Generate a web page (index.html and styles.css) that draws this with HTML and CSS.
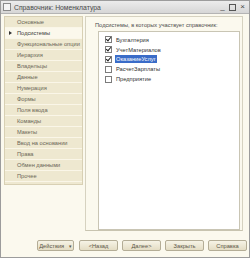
FILE: index.html
```html
<!DOCTYPE html>
<html>
<head>
    <link rel="stylesheet" href="styles.css">
</head>
<body>
<div class="window">
    <div class="titlebar">
        <span class="app-icon"></span>
        <span class="title">Справочник: Номенклатура</span>
        <span class="controls">
            <span class="ctl">_</span>
            <span class="ctl box"></span>
            <span class="ctl">×</span>
        </span>
    </div>

    <div class="main">
        <ul class="nav">
            <li>Основные</li>
            <li class="active">Подсистемы</li>
            <li>Функциональные опции</li>
            <li>Иерархия</li>
            <li>Владельцы</li>
            <li>Данные</li>
            <li>Нумерация</li>
            <li>Формы</li>
            <li>Поля ввода</li>
            <li>Команды</li>
            <li>Макеты</li>
            <li>Ввод на основании</li>
            <li>Права</li>
            <li>Обмен данными</li>
            <li>Прочее</li>
        </ul>

        <div class="pane">
            <div class="caption">Подсистемы, в которых участвует справочник:</div>
            <div class="listbox">
                <div class="row"><span class="check on"></span><span class="name">Бухгалтерия</span></div>
                <div class="row"><span class="check on"></span><span class="name">УчетМатериалов</span></div>
                <div class="row"><span class="check on"></span><span class="name selected">ОказаниеУслуг</span></div>
                <div class="row"><span class="check"></span><span class="name">РасчетЗарплаты</span></div>
                <div class="row"><span class="check"></span><span class="name">Предприятие</span></div>
            </div>
        </div>
    </div>

    <div class="footer">
        <button class="btn actions">Действия <span class="arrow">▾</span></button>
        <button class="btn">&lt;Назад</button>
        <button class="btn">Далее&gt;</button>
        <button class="btn">Закрыть</button>
        <button class="btn">Справка</button>
    </div>
</div>
</body>
</html>
```

FILE: styles.css
```css
body {
    margin: 0;
    background-color: #ffffff;
    font-family: "Liberation Sans", Arial, sans-serif;
}

.window {
    width: 250px;
    height: 258px;
    box-sizing: border-box;
    border: 1px solid #9c9c9c;
    background-color: #fbf9ee;
    display: flex;
    flex-direction: column;
}

.titlebar {
    height: 12px;
    display: flex;
    align-items: center;
    background: linear-gradient(#ececec, #d6d6d6);
    border-bottom: 1px solid #b4b4b4;
    padding: 0 2px;
}

.app-icon {
    width: 6px;
    height: 6px;
    border: 1px solid #8a8a8a;
    background: #f4f4f4;
    margin-right: 3px;
}

.title {
    font-size: 6.8px;
    color: #4a4a4a;
    flex: 1;
    white-space: nowrap;
}

.controls {
    display: flex;
    gap: 3px;
    align-items: center;
    margin-right: 1px;
}

.ctl {
    font-size: 8px;
    line-height: 8px;
    color: #444;
    width: 7px;
    text-align: center;
}

.ctl.box {
    width: 5px;
    height: 5px;
    border: 1px solid #555;
}

.main {
    flex: 1;
    display: flex;
    padding: 2px 6px 0 3px;
    gap: 2px;
}

.nav {
    list-style: none;
    margin: 0;
    padding: 0;
    width: 79px;
    height: 169px;
    background-color: #eee8d0;
    border: 1px solid #d8d0b4;
    box-sizing: border-box;
}

.nav li {
    height: 11px;
    line-height: 11px;
    font-size: 5.7px;
    color: #6a6656;
    padding-left: 12px;
    border-bottom: 1px solid #faf6e8;
    box-sizing: border-box;
    position: relative;
    white-space: nowrap;
}

.nav li.active {
    background-color: #fbf8ec;
    color: #3a3a3a;
}

.nav li.active::before {
    content: "";
    position: absolute;
    left: 4px;
    top: 3px;
    border-left: 3px solid #333;
    border-top: 2.5px solid transparent;
    border-bottom: 2.5px solid transparent;
}

.pane {
    flex: 1;
    border: 1px solid #d6d2c0;
    border-bottom-color: #c8c4b0;
    margin-bottom: 4px;
    padding: 4px 2px 0 9px;
    display: flex;
    flex-direction: column;
}

.caption {
    font-size: 5.7px;
    color: #4a4a4a;
    height: 10px;
    line-height: 8px;
    white-space: nowrap;
}

.listbox {
    flex: 1;
    background-color: #ffffff;
    border: 1px solid #c9c5b4;
    margin-left: 3px;
    padding-top: 3px;
    padding-left: 6px;
}

.row {
    height: 9.8px;
    display: flex;
    align-items: center;
    gap: 3px;
    font-size: 5.7px;
    color: #303030;
    white-space: nowrap;
}

.check {
    width: 5px;
    height: 5px;
    border: 1px solid #7c7c7c;
    background: #fff;
    position: relative;
}

.check.on::after {
    content: "";
    position: absolute;
    left: 1px;
    top: -1px;
    width: 2px;
    height: 4px;
    border-right: 1px solid #222;
    border-bottom: 1px solid #222;
    transform: rotate(40deg);
}

.name {
    padding: 1px 1px;
}

.name.selected {
    background-color: #3a6cc8;
    color: #ffffff;
}

.footer {
    height: 22px;
    display: flex;
    justify-content: flex-end;
    align-items: flex-start;
    gap: 4px;
    padding: 5px 2px 0 0;
    box-sizing: border-box;
}

.btn {
    flex: 0 0 39px;
    width: 39px;
    height: 11px;
    padding: 0;
    font-family: "Liberation Sans", Arial, sans-serif;
    font-size: 5.7px;
    color: #5a5646;
    background: linear-gradient(#f6f3e6, #e4ddc4);
    border: 1px solid #b4ad96;
    border-radius: 2px;
    white-space: nowrap;
}

.btn.actions {
    flex-basis: 37px;
    width: 37px;
    margin-right: 1px;
}

.arrow {
    font-size: 5px;
    margin-left: 3px;
}
```
